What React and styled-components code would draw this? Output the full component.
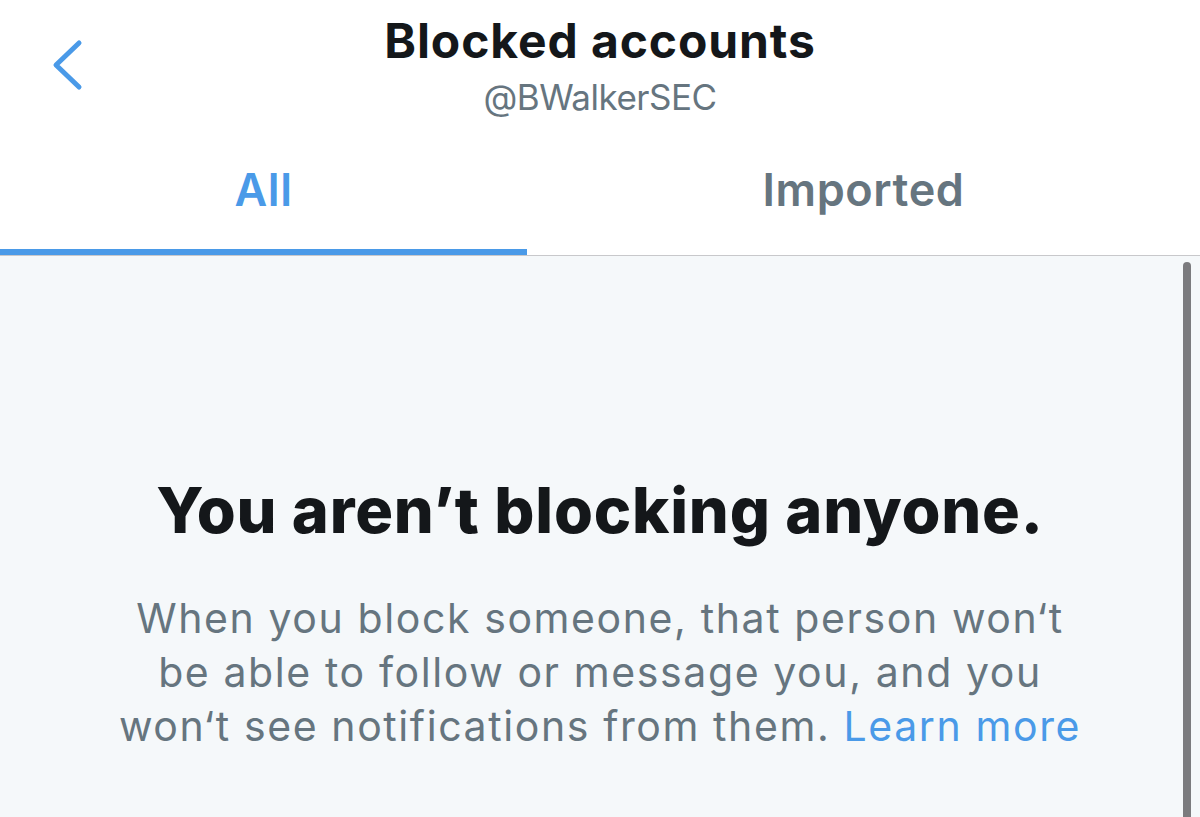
import React from "react";
import styled, { createGlobalStyle } from "styled-components";

const GlobalStyle = createGlobalStyle`
  html, body {
    margin: 0;
    padding: 0;
    background: #ffffff;
  }
  body {
    font-family: Inter, "Noto Sans", "Liberation Sans", sans-serif;
    -webkit-font-smoothing: antialiased;
  }
  #root {
    min-height: 100vh;
  }
`;

const Screen = styled.div`
  width: 1200px;
  height: 817px;
  display: flex;
  flex-direction: column;
  overflow: hidden;
  background: #ffffff;
`;

const Header = styled.header`
  height: 124px;
  display: grid;
  grid-template-columns: 1fr auto 1fr;
  align-items: start;
  box-sizing: border-box;
  padding-top: 12px;
`;

const BackButton = styled.button`
  justify-self: start;
  margin: 26px 0 0 48px;
  padding: 0;
  border: none;
  background: none;
  width: 40px;
  height: 56px;
  display: flex;
  align-items: center;
  justify-content: center;
  cursor: pointer;
`;

const TitleBlock = styled.div`
  display: flex;
  flex-direction: column;
  align-items: center;
`;

const Title = styled.h1`
  margin: 0;
  font-size: 48px;
  line-height: 58px;
  font-weight: 700;
  letter-spacing: 0.9px;
  color: #14171a;
`;

const Handle = styled.div`
  margin-top: 5px;
  font-size: 35px;
  line-height: 44px;
  font-weight: 400;
  letter-spacing: -0.5px;
  color: #66757f;
`;

const TabBar = styled.nav`
  display: flex;
  border-bottom: 1px solid #c8c8cb;
`;

const Tab = styled.div`
  flex: ${(p) => (p.$basis ? `0 0 ${p.$basis}px` : "1 1 0")};
  height: 131px;
  box-sizing: border-box;
  padding-top: 39px;
  display: flex;
  justify-content: center;
  align-items: flex-start;
  font-size: 45px;
  line-height: 54px;
  font-weight: 600;
  letter-spacing: 0.6px;
  color: ${(p) => (p.$active ? "#4a9ae8" : "#66757f")};
  border-bottom: 6px solid ${(p) => (p.$active ? "#4a9ae8" : "transparent")};
`;

const Content = styled.main`
  position: relative;
  flex: 1;
  background: #f5f8fa;
  display: flex;
  flex-direction: column;
  align-items: center;
  padding-top: 216px;
  box-sizing: border-box;
`;

const Scrollbar = styled.div`
  position: absolute;
  top: 6px;
  right: 9px;
  bottom: -10px;
  width: 8px;
  border-radius: 4px;
  background: #7b7b7e;
`;

const EmptyTitle = styled.h2`
  margin: 0;
  font-size: 63px;
  line-height: 76px;
  font-weight: 800;
  letter-spacing: 0.8px;
  color: #14171a;
  text-align: center;
`;

const EmptyText = styled.p`
  margin: 43px 0 0;
  font-size: 41px;
  line-height: 54px;
  font-weight: 400;
  letter-spacing: 1.6px;
  color: #66757f;
  text-align: center;
  white-space: nowrap;
`;

const Link = styled.a`
  color: #4a9ae8;
  text-decoration: none;
`;

function ChevronLeft() {
  return (
    <svg width="40" height="56" viewBox="0 0 40 56" fill="none">
      <path
        d="M31 5 L8 27 L31 49"
        stroke="#4a9ae8"
        strokeWidth="5"
        strokeLinecap="round"
        strokeLinejoin="round"
      />
    </svg>
  );
}

export default function App() {
  return (
    <>
      <GlobalStyle />
      <Screen>
        <Header>
          <BackButton aria-label="Back">
            <ChevronLeft />
          </BackButton>
          <TitleBlock>
            <Title>Blocked accounts</Title>
            <Handle>@BWalkerSEC</Handle>
          </TitleBlock>
          <div />
        </Header>
        <TabBar>
          <Tab $active $basis={527}>All</Tab>
          <Tab>Imported</Tab>
        </TabBar>
        <Content>
          <Scrollbar />
          <EmptyTitle>You aren’t blocking anyone.</EmptyTitle>
          <EmptyText>
            When you block someone, that person won‘t
            <br />
            be able to follow or message you, and you
            <br />
            won‘t see notifications from them. <Link href="#">Learn more</Link>
          </EmptyText>
        </Content>
      </Screen>
    </>
  );
}
